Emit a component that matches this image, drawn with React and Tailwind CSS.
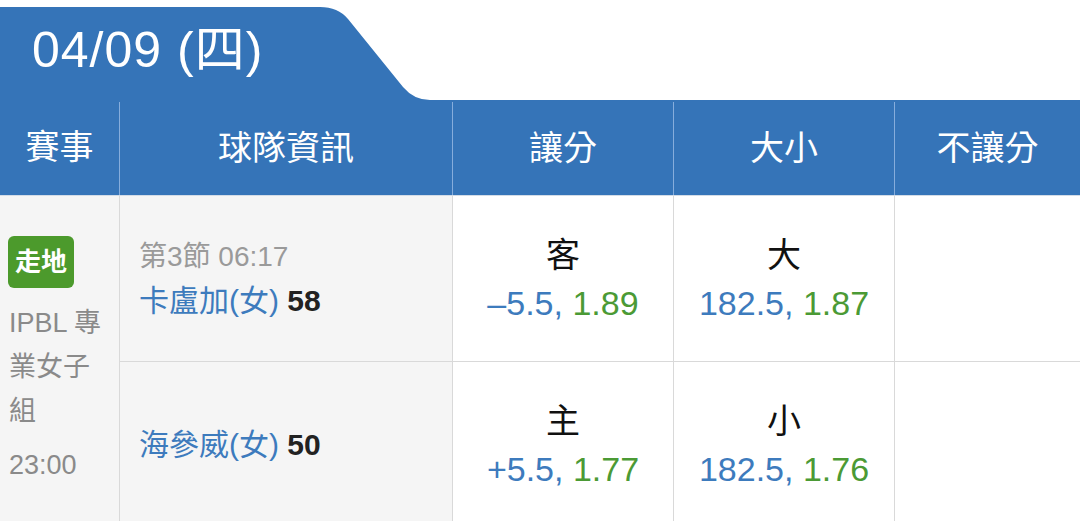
import React from 'react';

const rows = [
  { label: '客', spread: '–5.5', spreadOdds: '1.89', ou: '大', total: '182.5', totalOdds: '1.87' },
  { label: '主', spread: '+5.5', spreadOdds: '1.77', ou: '小', total: '182.5', totalOdds: '1.76' },
];

const Odds = ({ top, line, odds }) => (
  <div className="flex flex-col items-center justify-center h-full">
    <div className="text-[34px] leading-[48px] text-[#111]">{top}</div>
    <div className="text-[34px] leading-[48px] whitespace-nowrap">
      <span className="text-[#3d7bbd]">{line}, </span>
      <span className="text-[#4b9a35]">{odds}</span>
    </div>
  </div>
);

const App = () => {
  return (
    <div className="w-[1080px] h-[521px] overflow-hidden bg-white font-['Liberation_Sans','Noto_Sans_CJK_TC',sans-serif]">
      {/* date tab */}
      <div className="flex pt-[7px] h-[100px]">
        <div className="w-[300px] h-[93px] bg-[#3574b8] flex items-center pl-[32px] pb-[8px]">
          <span className="text-white text-[50px] leading-none tracking-[1px] whitespace-nowrap">04/09 (四)</span>
        </div>
        <svg width="130" height="93" viewBox="0 0 130 93" className="block">
          <path d="M0 0 H20 Q38 0 48 12 L103 80 Q114 93 130 93 H0 Z" fill="#3574b8" />
        </svg>
      </div>

      {/* header */}
      <div className="grid grid-cols-[119px_333px_221px_221px_1fr] h-[95px] bg-[#3574b8] text-white text-[34px]">
        <div className="flex items-center justify-center">賽事</div>
        <div className="flex items-center justify-center border-l border-[#86addc] mt-[2px]">球隊資訊</div>
        <div className="flex items-center justify-center border-l border-[#86addc] mt-[2px]">讓分</div>
        <div className="flex items-center justify-center border-l border-[#86addc] mt-[2px]">大小</div>
        <div className="flex items-center justify-center border-l border-[#86addc] mt-[2px]">不讓分</div>
      </div>

      {/* body */}
      <div className="grid grid-cols-[119px_333px_221px_221px_1fr] grid-rows-[166px_166px] border-t border-[#d3dce7]">
        <div className="row-span-2 bg-[#f5f5f5] pl-[8px] pt-[40px] text-[#8a8a8a] text-[27px] leading-[44px]">
          <div className="inline-flex items-center justify-center w-[66px] h-[52px] rounded-[6px] bg-[#4c9a2c] text-white text-[26px] font-bold">走地</div>
          <div className="mt-[13px] pl-[1px]">
            <div className="whitespace-nowrap">IPBL 專</div>
            <div>業女子</div>
            <div>組</div>
            <div className="mt-[10px]">23:00</div>
          </div>
        </div>

        {/* row 1 */}
        <div className="bg-[#f5f5f5] border-l border-[#d9d9d9] border-b flex flex-col justify-center pl-[19px]">
          <div className="text-[28px] leading-[44px] text-[#9a9a9a]">第3節 06:17</div>
          <div className="text-[30px] leading-[44px]">
            <span className="text-[#3d7bbd]">卡盧加(女)</span>
            <span className="text-[#222] font-semibold"> 58</span>
          </div>
        </div>
        <div className="border-l border-b border-[#d9d9d9]">
          <Odds top={rows[0].label} line={rows[0].spread} odds={rows[0].spreadOdds} />
        </div>
        <div className="border-l border-b border-[#d9d9d9]">
          <Odds top={rows[0].ou} line={rows[0].total} odds={rows[0].totalOdds} />
        </div>
        <div className="border-l border-b border-[#d9d9d9]"></div>

        {/* row 2 */}
        <div className="bg-[#f5f5f5] border-l border-[#d9d9d9] flex flex-col justify-center pl-[19px]">
          <div className="text-[30px] leading-[44px]">
            <span className="text-[#3d7bbd]">海參威(女)</span>
            <span className="text-[#222] font-semibold"> 50</span>
          </div>
        </div>
        <div className="border-l border-[#d9d9d9]">
          <Odds top={rows[1].label} line={rows[1].spread} odds={rows[1].spreadOdds} />
        </div>
        <div className="border-l border-[#d9d9d9]">
          <Odds top={rows[1].ou} line={rows[1].total} odds={rows[1].totalOdds} />
        </div>
        <div className="border-l border-[#d9d9d9]"></div>
      </div>
    </div>
  );
};

export default App;
